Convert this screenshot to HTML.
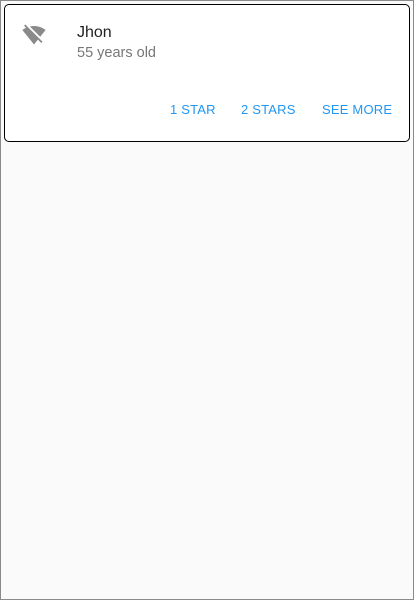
<!DOCTYPE html>
<html><head><meta charset="utf-8"><style>
html,body{margin:0;padding:0}
body{width:414px;height:600px;box-sizing:border-box;border:1px solid #8a8a8a;background:#fafafa;font-family:"Liberation Sans",sans-serif;position:relative;overflow:hidden}
.card{position:absolute;left:3px;top:3px;width:406px;height:138px;box-sizing:border-box;border:1px solid #000;border-radius:5px;background:#fff}
.icon{position:absolute;left:17px;top:18px}
.name{position:absolute;left:72px;top:19px;font-size:16px;color:#222}
.sub{position:absolute;left:72px;top:40px;font-size:14.5px;color:#777}
.btn{position:absolute;top:97px;font-size:13px;color:#2196f3;letter-spacing:0.2px}
</style></head><body>
<div class="card">
<svg class="icon" width="24" height="24" viewBox="0 0 24 24"><path fill="#8a8a8a" d="M23.64 7c-.45-.34-4.93-4-11.64-4-1.5 0-2.89.19-4.150.48L18.18 13.8 23.64 7zm-6.6 8.22L3.27 1.44 2 2.72l2.05 2.06C1.91 5.76.59 6.82.36 7l11.63 14.49.01.01.01-.01 3.9-4.86 3.32 3.32 1.27-1.27-3.46-3.46z"/></svg>
<div class="name">Jhon</div>
<div class="sub">55 years old</div>
<div class="btn" style="left:165px">1 STAR</div>
<div class="btn" style="left:236px">2 STARS</div>
<div class="btn" style="left:317px">SEE MORE</div>
</div>
</body></html>
